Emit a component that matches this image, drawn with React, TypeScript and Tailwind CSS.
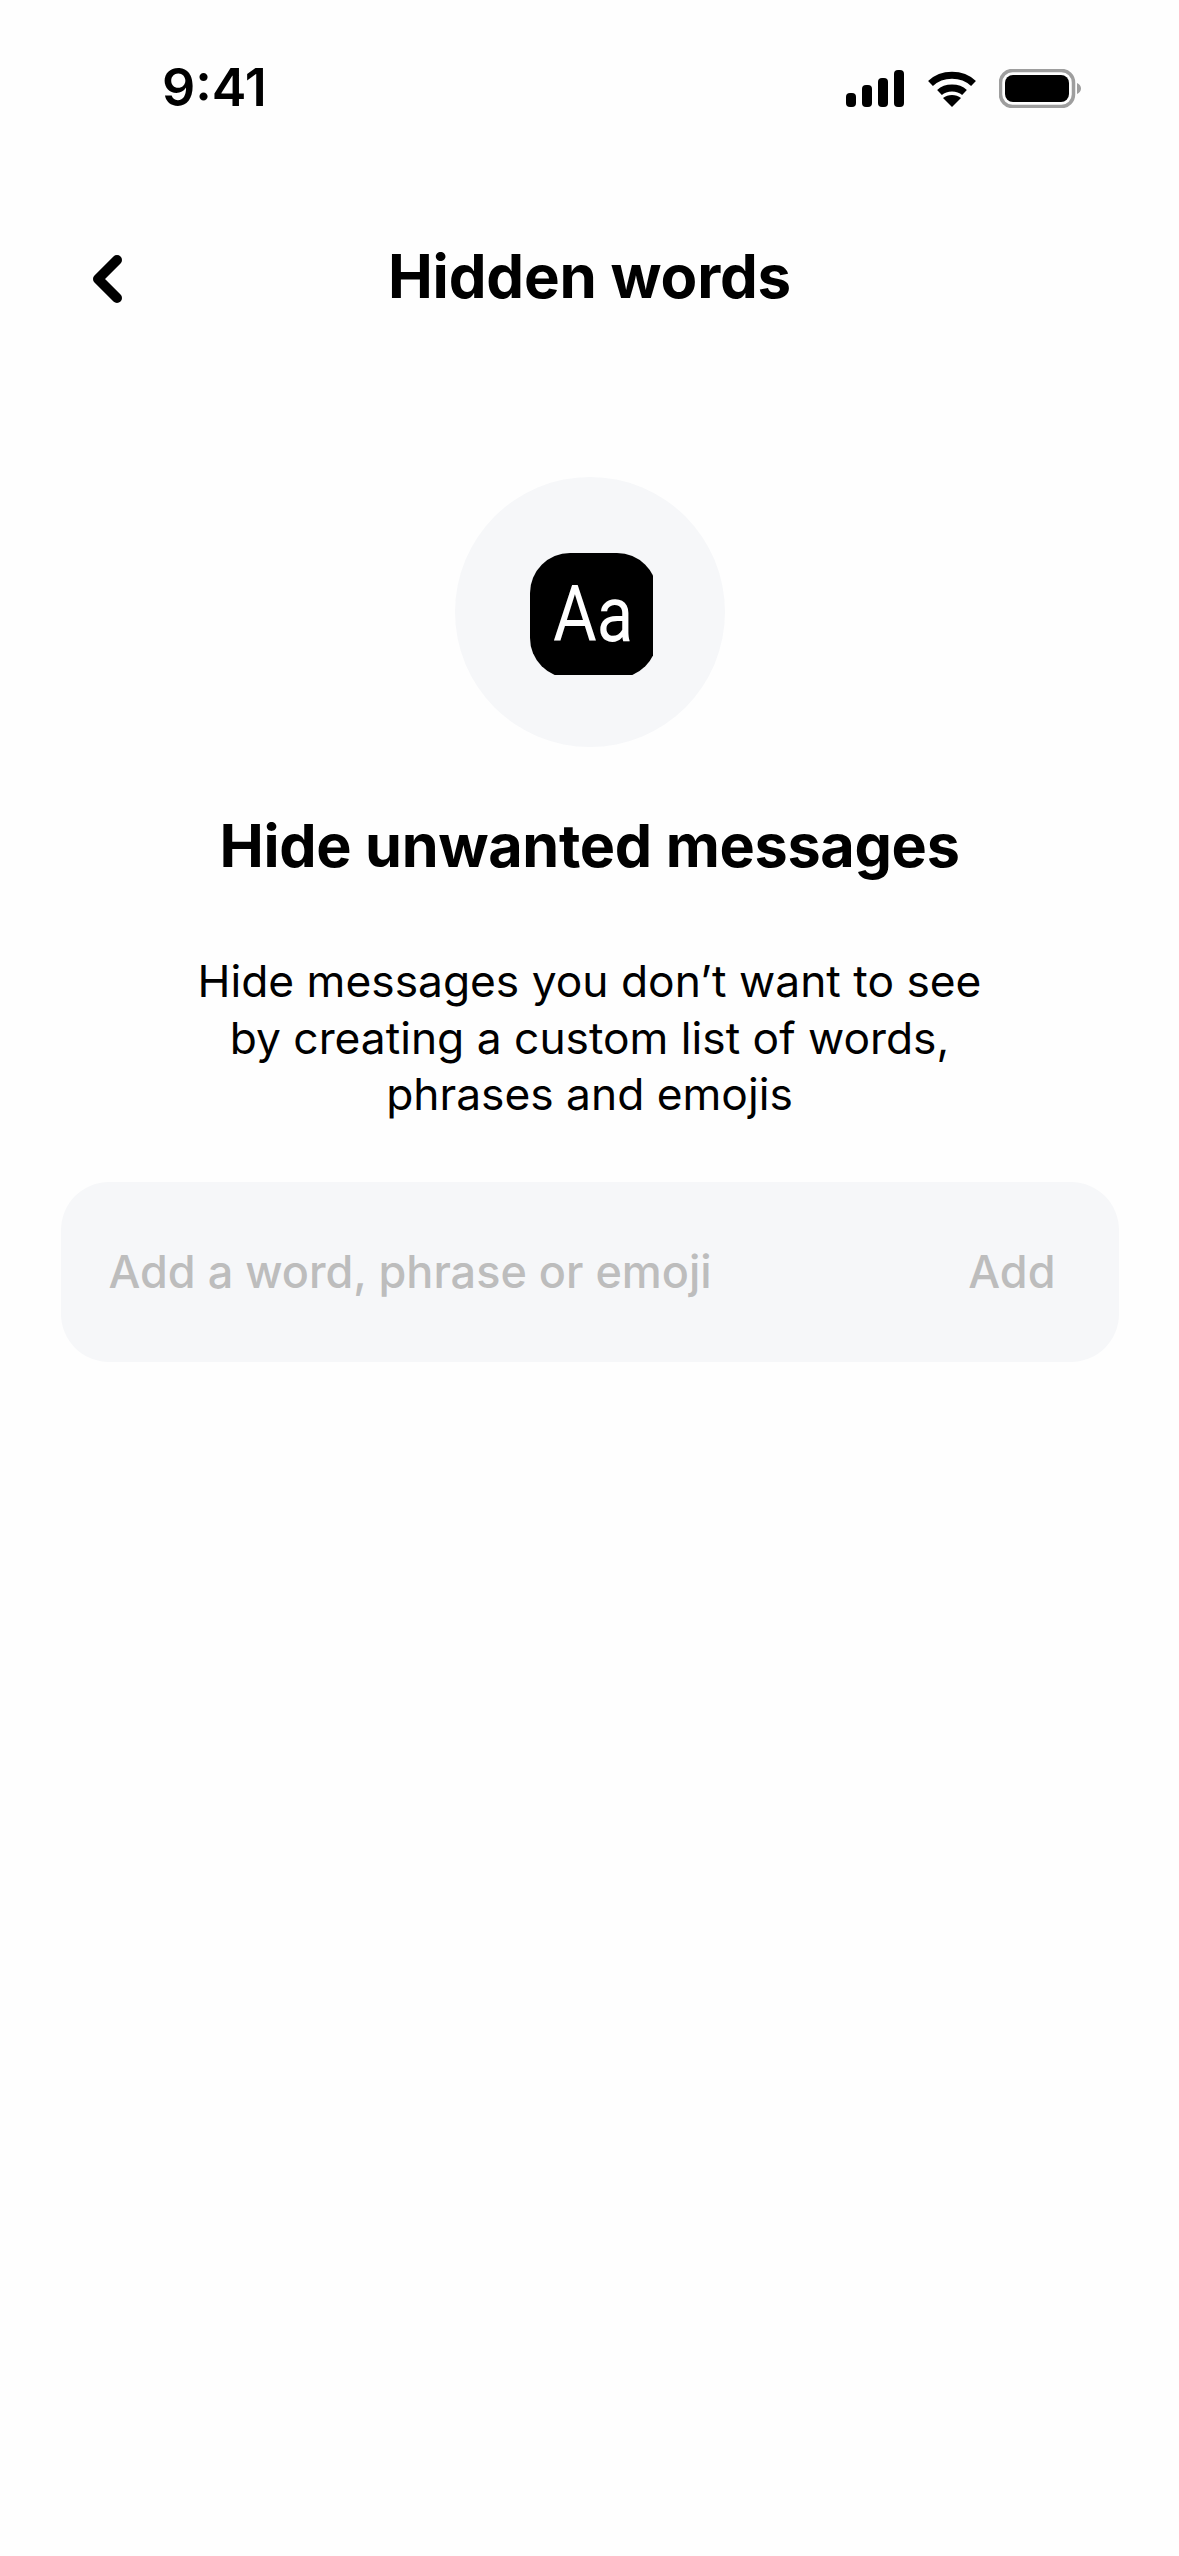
function StatusIcons() {
  return (
    <div className="flex items-center">
      <svg width="58" height="37" viewBox="0 0 58 37" fill="#000">
        <rect x="0" y="23" width="10" height="14" rx="4" />
        <rect x="16" y="15" width="10" height="22" rx="4" />
        <rect x="32" y="8" width="10" height="29" rx="4" />
        <rect x="48" y="0" width="10" height="37" rx="4" />
      </svg>
      <svg className="ml-[23px]" width="50" height="37" viewBox="0 0 50 37" fill="none" stroke="#000">
        <path d="M3.5 13.5C15 2.5 35 2.5 46.5 13.5" strokeWidth="7" />
        <path d="M12.5 22.5C19 16.5 31 16.5 37.5 22.5" strokeWidth="7" />
        <path d="M25 37L16 28C21 24 29 24 34 28Z" fill="#000" stroke="none" />
      </svg>
      <svg className="ml-[22px]" width="82" height="39" viewBox="0 0 82 39" fill="none">
        <rect x="1.5" y="1.5" width="73" height="36" rx="12" stroke="#9e9e9e" strokeWidth="3.5" />
        <rect x="6" y="6" width="64" height="27" rx="8" fill="#000" />
        <path d="M78 14C80.5 15 82 17 82 19.5C82 22 80.5 24 78 25Z" fill="#9e9e9e" />
      </svg>
    </div>
  );
}

export default function App() {
  return (
    <div className="w-full min-h-screen bg-[#fefefe] flex flex-col items-center text-black font-['Inter',sans-serif]">
      <div className="w-full h-[88px] mt-[44px] pl-[162px] pr-[98px] flex items-center justify-between">
        <span className="text-[52px] font-semibold leading-none">9:41</span>
        <StatusIcons />
      </div>

      <header className="w-full mt-[98px] h-[92px] grid grid-cols-[1fr_auto_1fr] items-center px-[92px]">
        <svg className="-ml-[2px] mt-[6px]" width="34" height="48" viewBox="0 0 34 48" fill="none" stroke="#000" strokeWidth="10" strokeLinecap="round" strokeLinejoin="round">
          <path d="M27 5L8 24L27 43" />
        </svg>
        <h1 className="text-[60px] font-bold tracking-[-0.2px] leading-none">Hidden words</h1>
        <div />
      </header>

      <div className="mt-[155px] w-[270px] h-[270px] rounded-full bg-[#f6f7f9] flex items-center justify-center">
        <div className="w-[123px] h-[122px] ml-[3px] mt-[3px] overflow-hidden">
          <div className="w-[127px] h-[125px] rounded-[40px] bg-black text-white flex items-center justify-start pl-[23px] font-['Roboto',sans-serif] text-[78px] leading-none">
            <span className="origin-left scale-x-[0.86]">Aa</span>
          </div>
        </div>
      </div>

      <h2 className="mt-[61px] text-[59.3px] font-bold tracking-[-0.3px] leading-[76px]">Hide unwanted messages</h2>

      <p className="mt-[69px] text-center text-[44.3px] leading-[56.5px]">
        Hide messages you don’t want to see
        <br />
        by creating a custom list of words,
        <br />
        phrases and emojis
      </p>

      <div className="mt-[59px] w-[1058px] h-[180px] rounded-[48px] bg-[#f6f7f9] flex items-center justify-between pl-[48px] pr-[63px] text-[45px] font-medium text-[#bdbdbd]">
        <span>Add a word, phrase or emoji</span>
        <span>Add</span>
      </div>
    </div>
  );
}
